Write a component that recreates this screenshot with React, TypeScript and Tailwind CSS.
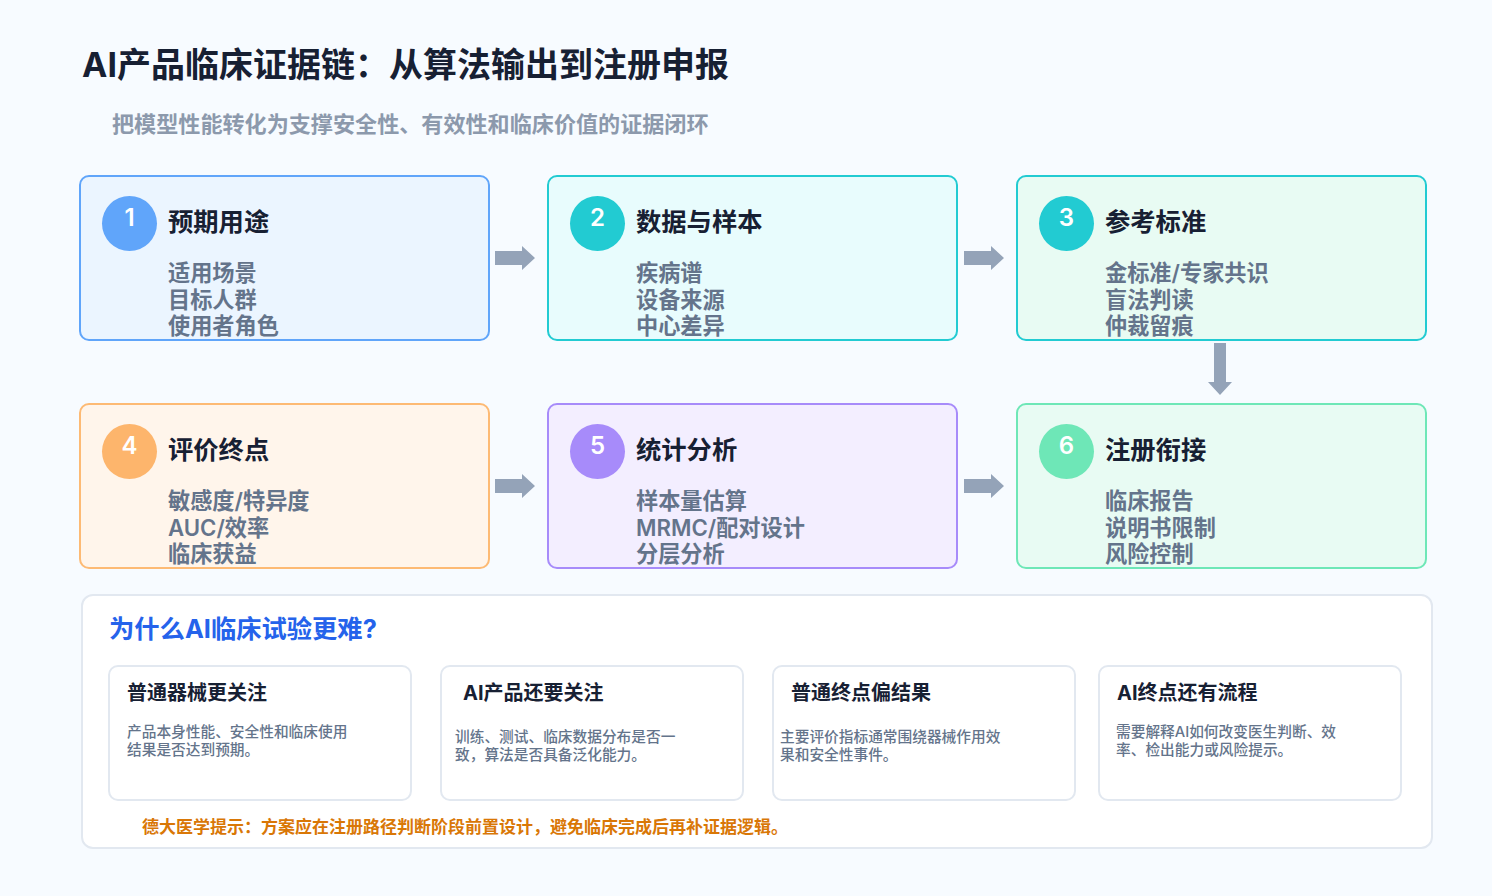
import React from "react";

const FONT = "font-['Inter','Noto_Sans_CJK_SC',sans-serif]";

interface Step {
  num: number;
  title: string;
  items: string[];
  card: string;
  dot: string;
}

const topSteps: Step[] = [
  { num: 1, title: "预期用途", items: ["适用场景", "目标人群", "使用者角色"], card: "border-[#60a5fa] bg-[#ebf5ff]", dot: "bg-[#60a5fa]" },
  { num: 2, title: "数据与样本", items: ["疾病谱", "设备来源", "中心差异"], card: "border-[#22cbd2] bg-[#e8fcfd]", dot: "bg-[#22cbd2]" },
  { num: 3, title: "参考标准", items: ["金标准/专家共识", "盲法判读", "仲裁留痕"], card: "border-[#22cbd2] bg-[#e8fbf3]", dot: "bg-[#22cbd2]" },
];

const bottomSteps: Step[] = [
  { num: 4, title: "评价终点", items: ["敏感度/特异度", "AUC/效率", "临床获益"], card: "border-[#fdba74] bg-[#fff5eb]", dot: "bg-[#fdb56c]" },
  { num: 5, title: "统计分析", items: ["样本量估算", "MRMC/配对设计", "分层分析"], card: "border-[#a78bfa] bg-[#f3eeff]", dot: "bg-[#a78bfa]" },
  { num: 6, title: "注册衔接", items: ["临床报告", "说明书限制", "风险控制"], card: "border-[#6ee7b7] bg-[#e8fbf3]", dot: "bg-[#6ee7b7]" },
];

function StepCard({ step }: { step: Step }) {
  return (
    <div className={`flex h-[166px] w-[411px] shrink-0 gap-[11px] rounded-[10px] border-2 pl-[21px] pt-[19px] ${step.card}`}>
      <div className={`flex h-[55px] w-[55px] shrink-0 justify-center rounded-full pt-[4px] text-[24px] font-semibold leading-[36px] text-white ${step.dot}`}>
        {step.num}
      </div>
      <div>
        <div className="mt-[10px] text-[25.3px] font-bold leading-[32px] text-[#172033]">{step.title}</div>
        <div className="mt-[22px] text-[22.2px] font-semibold leading-[26.5px] text-[#64748b]">
          {step.items.map((item) => (
            <div key={item}>{item}</div>
          ))}
        </div>
      </div>
    </div>
  );
}

function ArrowRight({ className }: { className: string }) {
  return (
    <div className={`flex shrink-0 items-center ${className}`}>
      <svg width="40" height="24" viewBox="0 0 40 24" className="mt-[-1px]">
        <path d="M0 5h27V0l13 12-13 12v-5H0z" fill="#94a3b8" />
      </svg>
    </div>
  );
}

function Row({ steps }: { steps: Step[] }) {
  return (
    <div className="ml-[79px] flex">
      <StepCard step={steps[0]} />
      <ArrowRight className="w-[57px] pl-[5px]" />
      <StepCard step={steps[1]} />
      <ArrowRight className="w-[58px] pl-[6px]" />
      <StepCard step={steps[2]} />
    </div>
  );
}

function InfoCard({
  title,
  text,
  className,
  titleClass,
  textClass,
}: {
  title: string;
  text: string[];
  className: string;
  titleClass: string;
  textClass: string;
}) {
  return (
    <div className={`h-[136px] w-[304px] shrink-0 rounded-[10px] border-2 border-[#e2e8f0] bg-white ${className}`}>
      <div className={`mt-[13px] text-[20px] font-bold leading-[26px] text-[#172033] ${titleClass}`}>{title}</div>
      <div className={`text-[14.7px] font-medium leading-[18px] text-[#64748b] ${textClass}`}>
        {text.map((t) => (
          <div key={t}>{t}</div>
        ))}
      </div>
    </div>
  );
}

export default function App() {
  return (
    <div className={`h-[896px] w-[1492px] overflow-hidden bg-[#f7fbff] ${FONT}`}>
      <h1 className="ml-[82px] pt-[43px] text-[34px] font-bold leading-[44px] text-[#172033]">
        AI产品临床证据链：从算法输出到注册申报
      </h1>
      <p className="ml-[112px] mt-[22px] text-[22.1px] font-semibold leading-[30px] text-[#8c99ac]">
        把模型性能转化为支撑安全性、有效性和临床价值的证据闭环
      </p>

      <div className="mt-[36px]">
        <Row steps={topSteps} />
        <div className="ml-[1208px] flex h-[62px] items-start pt-[2px]">
          <svg width="24" height="52" viewBox="0 0 24 52">
            <path d="M6 0h12v39h6L12 52 0 39h6z" fill="#94a3b8" />
          </svg>
        </div>
        <Row steps={bottomSteps} />
      </div>

      <section className="ml-[81px] mt-[25px] h-[255px] w-[1352px] rounded-[12px] border-2 border-[#e2e8f0] bg-white pl-[25px]">
        <h2 className="ml-[1px] mt-[16px] text-[25.3px] font-bold leading-[34px] text-[#2563eb]">为什么AI临床试验更难?</h2>
        <div className="mt-[19px] flex">
          <InfoCard
            title="普通器械更关注"
            text={["产品本身性能、安全性和临床使用", "结果是否达到预期。"]}
            className=""
            titleClass="ml-[17px]"
            textClass="ml-[17px] mt-[17px]"
          />
          <InfoCard
            title="AI产品还要关注"
            text={["训练、测试、临床数据分布是否一", "致，算法是否具备泛化能力。"]}
            className="ml-[28px]"
            titleClass="ml-[21px]"
            textClass="ml-[13px] mt-[22px]"
          />
          <InfoCard
            title="普通终点偏结果"
            text={["主要评价指标通常围绕器械作用效", "果和安全性事件。"]}
            className="ml-[28px]"
            titleClass="ml-[17px]"
            textClass="ml-[6px] mt-[22px]"
          />
          <InfoCard
            title="AI终点还有流程"
            text={["需要解释AI如何改变医生判断、效", "率、检出能力或风险提示。"]}
            className="ml-[22px]"
            titleClass="ml-[17px]"
            textClass="ml-[16px] mt-[17px]"
          />
        </div>
        <p className="ml-[34px] mt-[14px] text-[17px] font-bold leading-[24px] text-[#d97706]">
          德大医学提示：方案应在注册路径判断阶段前置设计，避免临床完成后再补证据逻辑。
        </p>
      </section>
    </div>
  );
}
